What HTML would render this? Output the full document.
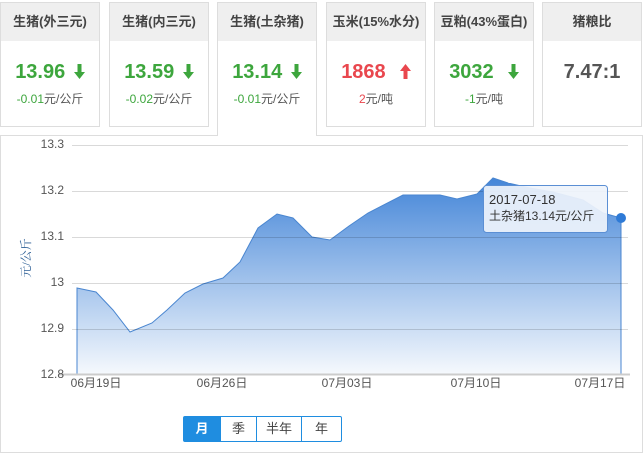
<!DOCTYPE html>
<html><head><meta charset="utf-8"><style>
*{margin:0;padding:0;box-sizing:border-box}
body{width:643px;height:454px;background:#fff;position:relative;overflow:hidden;font-family:"Liberation Sans","Microsoft YaHei","Noto Sans CJK SC",sans-serif}
.card{position:absolute;top:2px;width:100px;height:125px;border:1px solid #ddd;background:#fff}
.card .h{height:38px;background:#efefef;text-align:center;line-height:38px;font-size:13px;color:#444;font-weight:bold}
.card.act{height:134px;border-bottom:none;z-index:2}
.card .v{text-align:center;margin-top:19px;font-size:20px;font-weight:bold;line-height:24px}
.card .v svg{vertical-align:-1px;margin-left:3px}
.card .s{text-align:center;font-size:12px;margin-top:6px}
.g{color:#3da63d}.r{color:#e9474e}.k{color:#555}
.box{position:absolute;left:0;top:135px;width:643px;height:318px;border:1px solid #ddd}
.btns{position:absolute;left:183px;top:416px;height:26px;display:flex;border:1px solid #1f8de0;border-radius:2px;font-size:13px}
.btns div{text-align:center;line-height:24px;color:#444;border-left:1px solid #1f8de0}
.btns div:first-child{border-left:none;background:#1f8de0;color:#fff;font-weight:bold}
</style></head><body>
<div class="card" style="left:0"><div class="h">生猪(外三元)</div><div class="v g">13.96 <svg width="11" height="15" viewBox="0 0 11 15"><path d="M3.5,0h4v8h3.5L5.5,15L0,8h3.5z" fill="#3da63d"/></svg></div><div class="s g">-0.01<span style="color:#555">元/公斤</span></div></div>
<div class="card" style="left:109px"><div class="h">生猪(内三元)</div><div class="v g">13.59 <svg width="11" height="15" viewBox="0 0 11 15"><path d="M3.5,0h4v8h3.5L5.5,15L0,8h3.5z" fill="#3da63d"/></svg></div><div class="s g">-0.02<span style="color:#555">元/公斤</span></div></div>
<div class="card act" style="left:217px"><div class="h">生猪(土杂猪)</div><div class="v g">13.14 <svg width="11" height="15" viewBox="0 0 11 15"><path d="M3.5,0h4v8h3.5L5.5,15L0,8h3.5z" fill="#3da63d"/></svg></div><div class="s g">-0.01<span style="color:#555">元/公斤</span></div></div>
<div class="card" style="left:326px"><div class="h">玉米(15%水分)</div><div class="v r">1868 &nbsp;<svg width="11" height="15" viewBox="0 0 11 15"><path d="M3.5,15h4V7h3.5L5.5,0L0,7h3.5z" fill="#e9474e"/></svg></div><div class="s r">2<span style="color:#555">元/吨</span></div></div>
<div class="card" style="left:434px"><div class="h">豆粕(43%蛋白)</div><div class="v g">3032 &nbsp;<svg width="11" height="15" viewBox="0 0 11 15"><path d="M3.5,0h4v8h3.5L5.5,15L0,8h3.5z" fill="#3da63d"/></svg></div><div class="s g">-1<span style="color:#555">元/吨</span></div></div>
<div class="card" style="left:542px"><div class="h">猪粮比</div><div class="v k">7.47:1</div></div>
<div class="box"></div>
<svg width="643" height="454" style="position:absolute;left:0;top:0;z-index:1">
<defs><linearGradient id="gr" x1="0" y1="0" x2="0" y2="1"><stop offset="0" stop-color="#3a7fd6" stop-opacity=".95"/><stop offset="1" stop-color="#3a7fd6" stop-opacity=".05"/></linearGradient></defs>
<path d="M77,288 L96,292 L113,310 L130,332 L152,323 L167,310 L185,293 L203,284 L223,278 L240,262 L258,228 L277,214 L293,218 L312,237 L330,240 L349,226 L368,213 L403,195 L440,195 L457,199 L477,194 L493,178 L508,183 L530,188 L553,192 L583,200 L603,213 L621,218 L621,374 L77,374 Z" fill="url(#gr)" stroke="#4a86d0" stroke-width="1"/>
<g stroke="#000" stroke-opacity=".15" stroke-width="1">
<line x1="72" y1="145.5" x2="628" y2="145.5"/><line x1="72" y1="191.5" x2="628" y2="191.5"/><line x1="72" y1="237.5" x2="628" y2="237.5"/><line x1="72" y1="283.5" x2="628" y2="283.5"/><line x1="72" y1="329.5" x2="628" y2="329.5"/>
</g>
<line x1="58" y1="374.5" x2="630" y2="374.5" stroke="#ccc" stroke-width="2"/>
<g font-size="12" fill="#555" text-anchor="end">
<text x="64" y="148">13.3</text><text x="64" y="194">13.2</text><text x="64" y="240">13.1</text><text x="64" y="286">13</text><text x="64" y="332">12.9</text><text x="64" y="378">12.8</text>
</g>
<text transform="translate(30,258) rotate(-90)" font-size="12" fill="#2d5f96" text-anchor="middle" font-family="Liberation Serif,Noto Serif CJK SC,serif">元/公斤</text>
<g font-size="12" fill="#555" text-anchor="middle">
<text x="96" y="387">06月19日</text><text x="222" y="387">06月26日</text><text x="347" y="387">07月03日</text><text x="476" y="387">07月10日</text><text x="600" y="387">07月17日</text>
</g>
<rect x="483.5" y="185.5" width="124" height="47" rx="3" fill="#eef3fb" fill-opacity=".92" stroke="#5b8fd4"/>
<text x="489" y="204" font-size="13" fill="#333">2017-07-18</text>
<text x="489" y="220" font-size="12" fill="#333">土杂猪13.14元/公斤</text>
<circle cx="621" cy="218" r="5" fill="#2e7ad6"/>
</svg>
<div class="btns"><div style="width:36px">月</div><div style="width:36px">季</div><div style="width:45px">半年</div><div style="width:40px">年</div></div>
</body></html>
